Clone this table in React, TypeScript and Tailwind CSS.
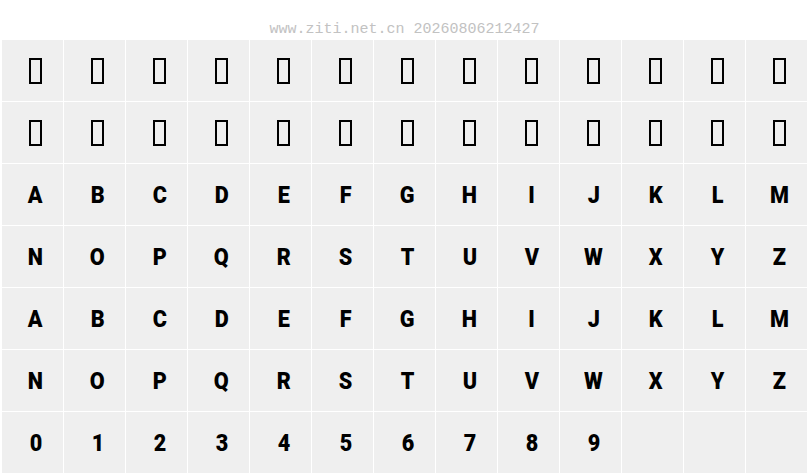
const rows: string[][] = [
  Array(13).fill("tofu"),
  Array(13).fill("tofu"),
  "ABCDEFGHIJKLM".split(""),
  "NOPQRSTUVWXYZ".split(""),
  "ABCDEFGHIJKLM".split(""),
  "NOPQRSTUVWXYZ".split(""),
  [..."0123456789".split(""), "", "", ""],
]

export default function App() {
  return (
    <div className="w-[808px] h-[476px] bg-white overflow-hidden">
      {/* watermark */}
      <div className="h-[40px] flex items-end justify-center pb-[2px]">
        <span className="font-['Liberation_Mono',monospace] text-[15px] leading-[17px] text-[#c2c2c2] pl-[1px]">
          www.ziti.net.cn 20260806212427
        </span>
      </div>

      {/* glyph grid */}
      <div className="ml-[2px] grid grid-cols-[repeat(13,61px)] auto-rows-[61px] gap-px">
        {rows.flat().map((ch, i) => (
          <div key={i} className="bg-[#efefef] flex items-center justify-center pl-[6px]">
            {ch === "tofu" ? (
              <span className="block w-[13px] h-[26px] border-2 border-black" />
            ) : (
              <span className="inline-block scale-x-[0.9] font-['Roboto',sans-serif] font-black text-[24px] leading-none text-black">
                {ch}
              </span>
            )}
          </div>
        ))}
      </div>
    </div>
  )
}
